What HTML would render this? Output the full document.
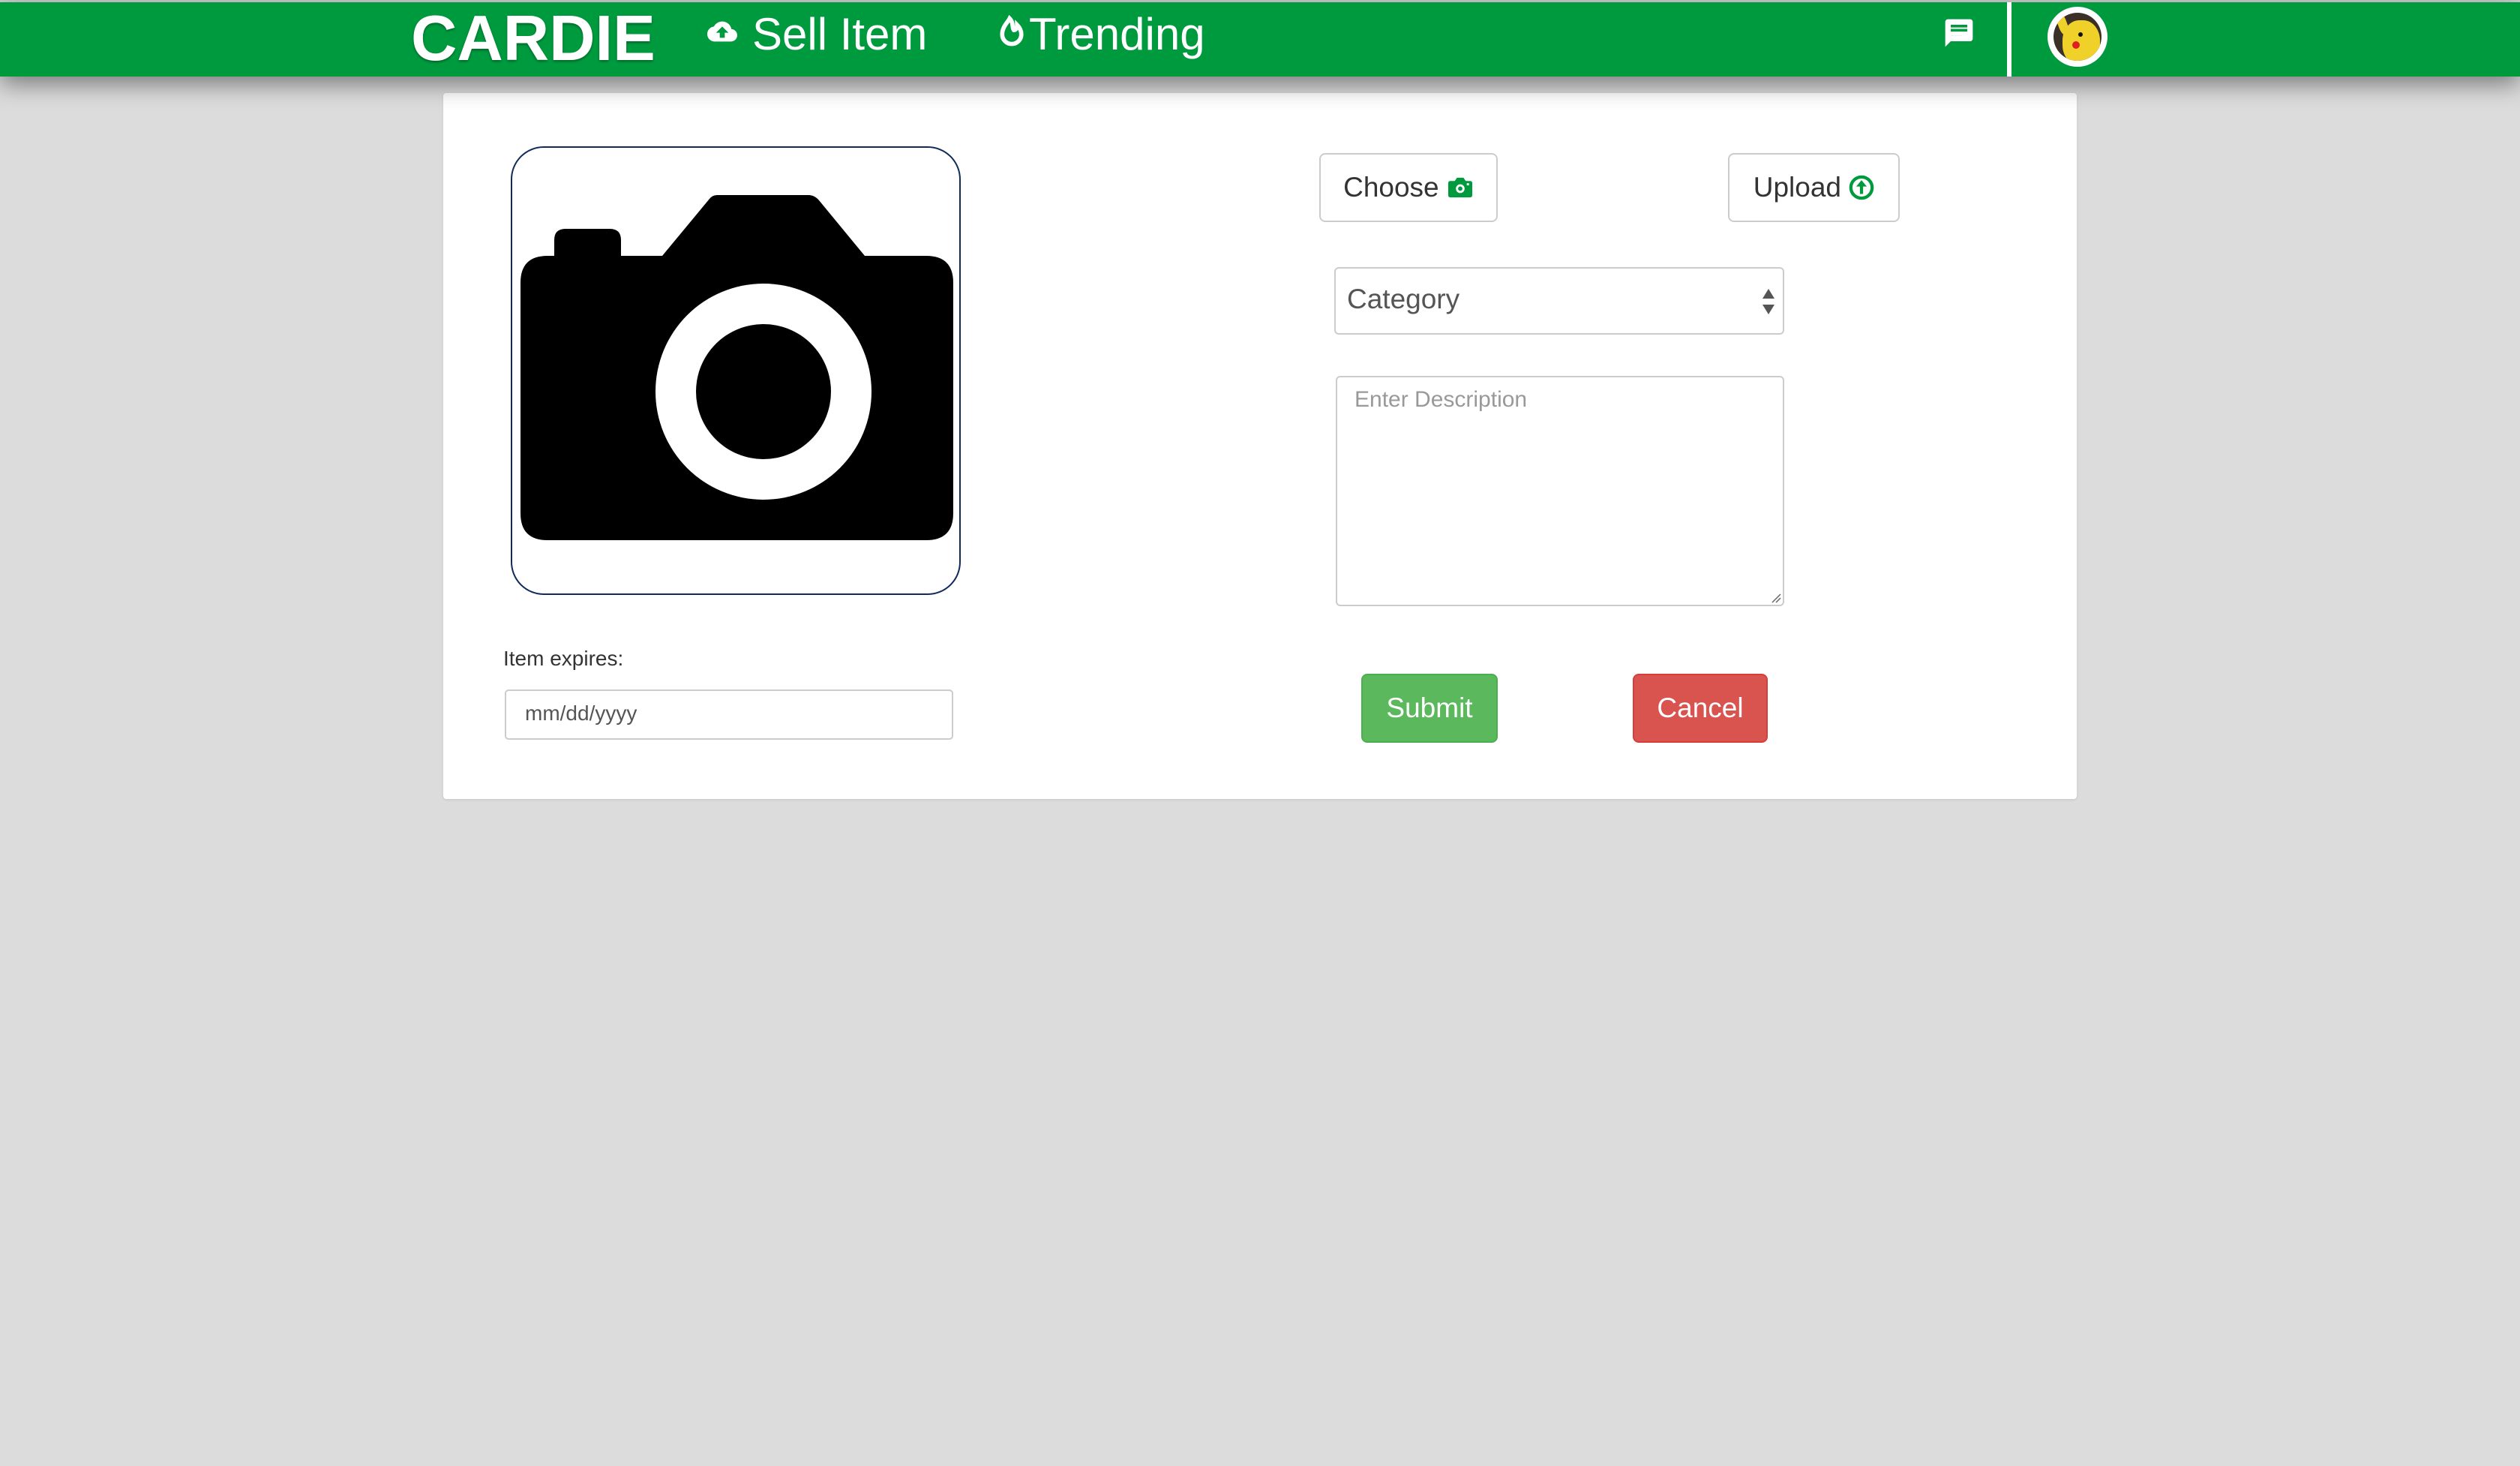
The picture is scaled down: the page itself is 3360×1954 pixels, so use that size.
<!DOCTYPE html>
<html><head><meta charset="utf-8"><style>
*{box-sizing:border-box;margin:0;padding:0}
body{width:3360px;height:1954px;background:#dcdcdc;font-family:"Liberation Sans",Arial,sans-serif;position:relative;overflow:hidden}
.nav{position:absolute;left:0;top:3px;width:3360px;height:99px;background:#009a3e;box-shadow:0 10px 30px rgba(0,0,0,.45);z-index:2}
.topline{position:absolute;left:0;top:0;width:3360px;height:3px;background:#cfcfcf}
.abs{position:absolute}
.brand{left:548px;top:0px;font-size:85px;font-weight:bold;color:#fff;text-shadow:0 2px 3px rgba(0,0,0,.35)}
.nl{color:#fff;font-size:60px;top:8px}
.card{left:591px;top:124px;width:2178px;height:941px;background:#fff;border-radius:4px;box-shadow:0 1px 3px rgba(0,0,0,.1)}
.btn{border:2px solid #ccc;border-radius:8px;background:#fff;color:#333;font-size:37px;display:flex;align-items:center;justify-content:center}
.inp{border:2px solid #ccc;border-radius:8px;background:#fff}
</style></head><body>
<div class="topline"></div>
<div class="nav">
  <div class="abs brand">CARDIE</div>
  <svg class="abs" style="left:938px;top:19px" width="50" height="40" viewBox="0 0 24 24"><path fill="#fff" d="M19.35 10.04A7.49 7.49 0 0 0 12 4C9.11 4 6.6 5.64 5.35 8.04A5.994 5.994 0 0 0 0 14c0 3.31 2.69 6 6 6h13c2.76 0 5-2.24 5-5 0-2.64-2.05-4.78-4.65-4.96zM14 13v4h-4v-4H7l5-5 5 5h-3z"/></svg>
  <div class="abs nl" style="left:1003px">Sell Item</div>
  <svg class="abs" style="left:1332px;top:17px" width="34" height="46" viewBox="0 0 24 32"><path fill="none" stroke="#fff" stroke-width="4" d="M10 3c-2 4 -7 8 -7 15a9 9 0 0 0 18 0c0-4-2-7-4-9c0 3-1 5-3 5c-2-2 0-7-4-11z"/></svg>
  <div class="abs nl" style="left:1372px">Trending</div>
  <svg class="abs" style="left:2590px;top:19px" width="44" height="44" viewBox="0 0 24 24"><path fill="#fff" d="M20 2H4c-1.1 0-2 .9-2 2v18l4-4h14c1.1 0 2-.9 2-2V4c0-1.1-.9-2-2-2zM6 9h12v2H6zm8 5H6v-2h8zm4-6H6V6h12z"/><path fill="#fff" d="M6 12h12v2H6z"/></svg>
  <div class="abs" style="left:2676px;top:0;width:6px;height:99px;background:#fff"></div>
  <div class="abs" style="left:2730px;top:6px;width:80px;height:80px;border-radius:50%;background:#fff"></div>
  <div class="abs" style="left:2738px;top:14px;width:64px;height:64px;border-radius:50%;background:#3a3028;overflow:hidden">
    <div class="abs" style="left:12px;top:10px;width:50px;height:60px;border-radius:45%;background:#efd12a"></div>
    <div class="abs" style="left:6px;top:0px;width:12px;height:30px;border-radius:40%;background:#efd12a;transform:rotate(-20deg)"></div>
    <div class="abs" style="left:25px;top:38px;width:10px;height:10px;border-radius:50%;background:#e02020"></div>
    <div class="abs" style="left:33px;top:26px;width:6px;height:6px;border-radius:50%;background:#111"></div>
  </div>
</div>
<div class="abs card"></div>
<div class="abs" style="left:681px;top:195px;width:600px;height:598px;border:2px solid #102a5a;border-radius:44px;background:#fff"></div>
<svg class="abs" style="left:0;top:0" width="3360" height="1954">
  <path fill="#000" d="M739 341 V320 Q739 305 754 305 H813 Q828 305 828 320 V341 H883 L946 265 Q950 260 956 260 H1078 Q1086 260 1092 267 L1153 341 H1235 Q1271 341 1271 377 V684 Q1271 720 1235 720 H730 Q694 720 694 684 V377 Q694 341 730 341 Z"/>
  <circle cx="1018" cy="522" r="144" fill="#fff"/>
  <circle cx="1018" cy="522" r="90" fill="#000"/>
</svg>
<div class="abs" style="left:671px;top:862px;font-size:28px;color:#333">Item expires:</div>
<div class="abs inp" style="left:673px;top:919px;width:598px;height:67px;border-radius:5px"></div>
<div class="abs" style="left:700px;top:935px;font-size:28px;color:#555">mm/dd/yyyy</div>

<div class="abs btn" style="left:1759px;top:204px;width:238px;height:92px">Choose&nbsp;<svg width="36" height="32" viewBox="0 0 24 22"><path fill="#009a3e" d="M3 5h4l2-3h6l2 3h4q2 0 2 2v11q0 2-2 2H3q-2 0-2-2V7q0-2 2-2z"/><circle cx="12" cy="12" r="4" fill="#fff"/><circle cx="12" cy="12" r="2" fill="#009a3e"/><rect x="18" y="7" width="2" height="2" fill="#fff"/></svg></div>
<div class="abs btn" style="left:2304px;top:204px;width:229px;height:92px">Upload&nbsp;<svg width="34" height="34" viewBox="0 0 24 24"><circle cx="12" cy="12" r="10" fill="none" stroke="#009a3e" stroke-width="3"/><path fill="#009a3e" d="M12 5l5 6h-3.5v7h-3v-7H7z"/></svg></div>

<div class="abs inp" style="left:1779px;top:356px;width:600px;height:90px;border-radius:6px"></div>
<div class="abs" style="left:1796px;top:378px;font-size:37px;color:#555">Category</div>
<svg class="abs" style="left:2349px;top:385px" width="18" height="34" viewBox="0 0 18 34"><path fill="#555" d="M9 0L17 13H1zM9 34L1 21h16z"/></svg>

<div class="abs inp" style="left:1781px;top:501px;width:598px;height:307px;border-radius:6px"></div>
<div class="abs" style="left:1806px;top:516px;font-size:30px;color:#999">Enter Description</div>
<svg class="abs" style="left:2361px;top:790px" width="14" height="14"><path d="M2 13L13 2M7 13L13 7" stroke="#666" stroke-width="1.5"/></svg>

<div class="abs btn" style="left:1815px;top:898px;width:182px;height:92px;background:#5cb85c;border-color:#4cae4c;color:#fff">Submit</div>
<div class="abs btn" style="left:2177px;top:898px;width:180px;height:92px;background:#d9534f;border-color:#d43f3a;color:#fff">Cancel</div>
</body></html>
